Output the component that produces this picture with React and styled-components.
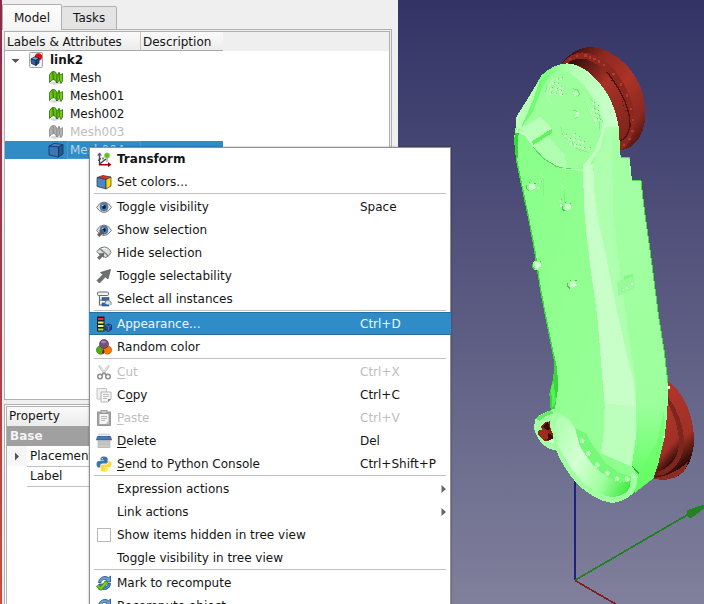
import React, { useState } from 'react';
import styled, { createGlobalStyle, css } from 'styled-components';

const colors = {
  window: '#efefef',
  base: '#ffffff',
  text: '#141414',
  disabled: '#bebebe',
  highlight: '#308cc6',
  highlightEdge: '#2670a0',
  frame: '#b0b0b0',
};

const GlobalStyle = createGlobalStyle`
  * {
    box-sizing: border-box;
  }

  body {
    margin: 0;
    overflow: hidden;
    background: ${colors.window};
    color: ${colors.text};
    font-family: 'DejaVu Sans', sans-serif;
    font-size: 12px;
    line-height: 18px;
  }

  button {
    margin: 0;
    padding: 0;
    border: 0;
    background: none;
    color: inherit;
    font: inherit;
    text-align: left;
  }
`;

const Window = styled.div`
  position: relative;
  display: flex;
  height: 100vh;
  overflow: hidden;
`;

const SidePanel = styled.aside`
  display: flex;
  flex-direction: column;
  flex: 0 0 398px;
  padding: 4px 6px 0 0;
  border-left: 2px solid;
  border-image: linear-gradient(#8c2a4c, #a83a48 50%, #d04a3c) 1;
  background: ${colors.window};
`;

const Tabs = styled.div`
  display: flex;
  align-items: flex-end;
  height: 26px;
`;

const Tab = styled.button`
  height: ${(props) => (props.$active ? 26 : 24)}px;
  padding: 0 11px;
  border: 1px solid ${colors.frame};
  border-bottom: ${(props) => (props.$active ? 'none' : `1px solid ${colors.frame}`)};
  border-left-width: ${(props) => (props.$active ? 1 : 0)}px;
  border-radius: 2px 2px 0 0;
  background: ${(props) => (props.$active ? 'linear-gradient(#fdfdfd, #f4f4f4)' : '#e4e4e4')};
`;

const TabLine = styled.div`
  flex: 1;
  height: 1px;
  background: ${colors.frame};
`;

const Pane = styled.div`
  display: flex;
  flex-direction: column;
  flex: 1;
  gap: 4px;
  padding: 1px 1px 0 2px;
  border-right: 1px solid ${colors.frame};
`;

const TreeFrame = styled.section`
  flex: 0 0 369px;
  border: 1px solid ${colors.frame};
  background: linear-gradient(${colors.window} 19px, ${colors.base} 19px);
`;

const Tree = styled.table`
  width: 218px;
  border-collapse: collapse;
  table-layout: fixed;

  th,
  td {
    height: 18px;
    padding: 0;
    overflow: hidden;
    white-space: nowrap;
  }
`;

const TreeHeading = styled.th`
  width: ${(props) => props.$width}px;

  div {
    height: 19px;
    padding: 1px 0 0 2px;
    border-right: ${(props) => (props.$divided ? '1px solid #c6c6c6' : 'none')};
    border-bottom: 1px solid #a8a8a8;
    background: linear-gradient(#fafafa, #ececec);
    font-weight: normal;
    text-align: left;
  }
`;

const TreeRow = styled.tr`
  color: ${(props) => (props.$hidden ? colors.disabled : colors.text)};
  font-weight: ${(props) => (props.$root ? 'bold' : 'normal')};

  ${(props) =>
    props.$selected &&
    css`
      background: ${colors.highlight};
      color: #b4d6ec;
    `}
`;

const TreeItem = styled.div`
  display: flex;
  align-items: center;
  height: 18px;
  padding-left: ${(props) => (props.$root ? 6 : 43)}px;
`;

const TreeLabel = styled.span`
  flex: 1;
  height: 18px;
  margin-left: 3px;
  padding-left: 3px;
  line-height: 19px;
  box-shadow: ${(props) => (props.$focused ? 'inset 0 0 0 1px #4a9ad0' : 'none')};
`;

const Expander = styled.span`
  display: flex;
  width: 17px;
`;

const PropertyFrame = styled.section`
  flex: 1;
  padding: 1px 1px 0;
  border: 1px solid ${colors.frame};
  border-bottom: 0;
  background: ${colors.base};
`;

const PropertyInner = styled.div`
  height: 100%;
  border: 1px solid ${colors.frame};
  border-bottom: 0;
`;

const PropertyTable = styled.table`
  width: 100%;
  border-collapse: collapse;

  th,
  td {
    padding: 0;
    font-weight: normal;
    text-align: left;
  }

  thead th {
    height: 18px;
    padding-left: 2px;
    background: linear-gradient(#fafafa, #ebebeb);
    line-height: 19px;
  }
`;

const GroupCell = styled.th`
  && {
    height: 20px;
    padding-left: 3px;
    background: #a0a0a0;
    color: #f4f4f4;
    font-weight: bold;
  }
`;

const ExpandCell = styled.td`
  width: 20px;
  height: 20px;
  background: ${(props) => (props.$shaded ? '#f6f6f6' : colors.base)};

  svg {
    display: block;
    margin-left: 6px;
  }
`;

const PropertyName = styled.td`
  && {
    height: 20px;
    padding-left: 3px;
    border-bottom: 1px solid #c0c0c0;
  }
`;

const Viewport = styled.main`
  flex: 1;
  min-width: 0;
  background: linear-gradient(#333366, #80809c);

  svg {
    display: block;
    width: 100%;
    height: 100%;
  }
`;

const Menu = styled.div`
  position: absolute;
  top: 147px;
  left: 89px;
  width: 362px;
  background: ${colors.base};
  box-shadow: inset 0 0 0 1px #8f8f8f, 0 0 2px rgba(0, 0, 0, 0.35);
`;

const itemLayout = css`
  display: grid;
  grid-template-columns: 16px 1fr 86px;
  column-gap: 5px;
  align-items: center;
  width: 100%;
  height: 23px;
  padding: 0 5px 0 7px;
  white-space: nowrap;

  u {
    text-underline-offset: 2px;
  }
`;

const MenuItem = styled.button`
  ${itemLayout}
  font-weight: ${(props) => (props.$bold ? 'bold' : 'normal')};

  &:disabled {
    color: ${colors.disabled};
  }

  ${(props) =>
    props.$current &&
    css`
      border: solid ${colors.highlightEdge};
      border-width: 1px 0;
      background: ${colors.highlight};
      color: #eef6fb;
    `}
`;

const MenuCheck = styled.label`
  ${itemLayout}

  input {
    appearance: none;
    width: 14px;
    height: 14px;
    margin: 0 0 0 1px;
    border: 1px solid #b8b8b8;
    background: ${colors.base};
  }

  input:checked {
    background: ${colors.highlight};
  }
`;

const IconSlot = styled.span`
  display: flex;
  width: 16px;
  height: 16px;
`;

const SubmenuArrow = styled.svg`
  justify-self: end;
`;

const Separator = styled.hr`
  height: 2px;
  margin: 0 5px;
  border: 0;
  border-top: 1px solid #c0c0c0;
`;

const Svg = ({ children }) => (
  <svg width="16" height="16" viewBox="0 0 16 16" aria-hidden="true">
    {children}
  </svg>
);

const MeshIcon = ({ muted }) => {
  const fill = muted ? '#b4b4b4' : '#73d216';
  const edge = muted ? '#888888' : '#2c6a05';
  return (
    <Svg>
      <path d="M1 13 6 15l9-2-4-2z" fill="#d8d8d8" />
      <g fill={fill} stroke={edge} strokeWidth=".8" strokeLinejoin="round">
        <path d="M1.500 5 3 2.500 5 1.500 5.500 9.500 3.500 10.500 1.500 12.500z" />
        <path d="M5 1.500 7.500 2 9 5v8L7 10l-1.500-.5z" />
        <path d="M9 5 11 2.500 11.500 10 9 13z" />
        <path d="M11 2.500 12.500 5 14.500 3.500V11L13 13.500 11.500 10z" />
      </g>
      <path d="M4 3v7M7 3v7" stroke={edge} strokeWidth=".4" fill="none" />
    </Svg>
  );
};

const LinkGroupIcon = () => (
  <Svg>
    <rect x="1.500" y=".5" width="13" height="15" rx="1" fill="#f0f0ee" stroke="#a4a6a2" />
    <circle cx="10.500" cy="4.800" r="3.600" fill="#d90d16" />
    <g stroke="#0b1f3a" strokeWidth=".7" strokeLinejoin="round">
      <path d="M3 7 6.500 4.800 11 6 8 8.500z" fill="#729fcf" />
      <path d="m3 7 5 1.500v5L3.500 11.500z" fill="#3465a4" />
      <path d="M8 8.500 11 6v5l-3 2.500z" fill="#204a87" />
    </g>
  </Svg>
);

const BoxIcon = () => (
  <Svg>
    <g stroke="#12345f" strokeWidth=".8" strokeLinejoin="round">
      <path d="M1 4 6 1.500l9 1L10.500 5z" fill="#4a85c2" />
      <path d="m1 4 9.500 1v10L1 13z" fill="#3a76b8" />
      <path d="M10.500 5 15 2.500V12l-4.500 3z" fill="#24568f" />
    </g>
  </Svg>
);

const TransformIcon = () => (
  <Svg>
    <path d="M3.500 2.500v10.500L10 8M2 9.500l3-2" stroke="#41484c" strokeWidth="1.400" fill="none" />
    <path d="m1 4.500 2.500-3 2.500 3z" fill="#555b5e" />
    <path d="M5.500 6.500h3L7 9.500z" fill="#888a85" />
    <circle cx="11" cy="4.500" r="2.800" fill="#5fc21b" stroke="#b5dba0" strokeWidth=".7" />
    <path d="M11 7v4" stroke="#888a85" />
    <path d="M3 13h9v-2l3.500 2.700L12 16v-1.500H3z" fill="#a40000" />
  </Svg>
);

const ColorCubeIcon = () => (
  <Svg>
    <g stroke="#2e3436" strokeWidth=".7" strokeLinejoin="round">
      <path d="M1 3.500 7 1.500l8 1.500-5 2.500z" fill="#ef2929" />
      <path d="m1 3.500 9 2V15l-9-2.500z" fill="#4b87c8" />
      <path d="m10 5.500 5-2.500v9L10 15z" fill="#f7d800" />
    </g>
  </Svg>
);

const EyeIcon = ({ children }) => (
  <Svg>
    <path d="M.5 8.500Q3.500 3 8 3t7.500 5.500Q12 13.500 8 13.500T.5 8.500z" fill="#e9e9e7" stroke="#72767a" />
    <circle cx="8" cy="8" r="4" fill="#5580b6" stroke="#3b618f" strokeWidth=".7" />
    <circle cx="8" cy="8" r="1.900" fill="#0e1a28" />
    <circle cx="6.700" cy="6.500" r=".8" fill="#c9dcef" />
    {children}
  </Svg>
);

const ShowIcon = () => (
  <EyeIcon>
    <path d="M8 8v5l-1.500-1.500L3.500 15 1 12.500 4 10 2.500 8.500z" fill="#5b5f61" />
  </EyeIcon>
);

const HideIcon = () => (
  <Svg>
    <path d="M.8 6.500Q4 1.500 8.500 2q5 .5 6.500 5.500-2 4-5 5-6-1-9.200-6z" fill="#dededc" stroke="#777b7d" />
    <path d="M3.500 3.500 12.500 11" stroke="#777b7d" strokeWidth="1.200" />
    <path d="M6 3.500q4-1 5 1.500" stroke="#ffffff" fill="none" />
    <path d="M8 8v5l-1.500-1.500L3.500 15 1 12.500 4 10 2.500 8.500z" fill="#686c6e" />
  </Svg>
);

const CursorIcon = () => (
  <Svg>
    <path d="M14.500 1.500 12 11 9.500 8.800 3.500 15 1 12.500 7 6.500 4.500 4.500z" fill="#6d7173" stroke="#505456" strokeWidth=".7" />
  </Svg>
);

const InstancesIcon = () => (
  <Svg>
    <path d="M3.500 5v9H8M3.500 9H6" stroke="#686c6e" fill="none" strokeWidth="1.200" />
    <rect x="1.500" y="1" width="11" height="3.500" rx="1" fill="#f2f2f0" stroke="#686c6e" />
    <rect x="6" y="6.500" width="7" height="3" fill="#3465a4" stroke="#204a87" strokeWidth=".6" />
    <rect x="6" y="12" width="7" height="3" fill="#3465a4" stroke="#204a87" strokeWidth=".6" />
    <path d="M9 13q-.5-3.500 3-4l3 2v3" fill="#e0e0de" stroke="#686c6e" strokeWidth=".8" />
  </Svg>
);

const AppearanceIcon = () => (
  <Svg>
    <rect x="1" y=".5" width="7.500" height="15" fill="#172027" />
    <rect x="2" y="2" width="5.500" height="2" fill="#ef2929" />
    <rect x="2" y="5.500" width="5.500" height="2" fill="#fce94f" />
    <rect x="2" y="9" width="5.500" height="2" fill="#f4f080" />
    <rect x="2" y="12.500" width="5.500" height="2" fill="#8ae234" />
    <path d="m9 9.500 3-1.500 3.500 1v4.500l-3 2L9 14z" fill="#204a87" stroke="#0b2549" strokeWidth=".6" />
    <path d="m9.500 9.700 3 .8 2.500-1.300M12.500 10.500v4.500" stroke="#5288c4" strokeWidth=".7" fill="none" />
  </Svg>
);

const RandomColorIcon = () => (
  <Svg>
    <circle cx="4.700" cy="11" r="4.300" fill="#4eae12" stroke="#2f6f05" strokeWidth=".6" />
    <circle cx="11.500" cy="11" r="4.200" fill="#f57900" stroke="#a85000" strokeWidth=".6" />
    <circle cx="8" cy="5" r="4.500" fill="#75507b" stroke="#4f3056" strokeWidth=".6" />
    <ellipse cx="7.500" cy="3" rx="2.500" ry="1.300" fill="#a588aa" />
    <path d="m7 10 1.500 2-1 3-1.500-1z" fill="#a40000" />
  </Svg>
);

const CutIcon = () => (
  <Svg>
    <path d="M3 1.500 10 11M13 1.500 6 11" stroke="#c8c8c8" strokeWidth="2.200" />
    <path d="M3.500 1.500 9 9.500M12.500 1.500 7 9.500" stroke="#f0f0f0" strokeWidth=".8" />
    <circle cx="4" cy="12.500" r="2.300" fill="none" stroke="#8c8c8c" strokeWidth="1.500" />
    <circle cx="12" cy="12.500" r="2.300" fill="none" stroke="#8c8c8c" strokeWidth="1.500" />
    <path d="m6 10.500 2-2 2 2" stroke="#8c8c8c" strokeWidth="1.200" fill="none" />
  </Svg>
);

const CopyIcon = () => (
  <Svg>
    <path d="M1 1.500h9.500V12H1z" fill="#f0f0f0" stroke="#c4c4c4" />
    <path d="M5 5h10v7l-3 3H5z" fill="#f7f7f7" stroke="#b4b4b4" />
    <path d="M7 7.500h6M7 9.500h6M7 11.500h4" stroke="#bcbcbc" />
    <path d="M15 12h-3v3z" fill="#8d8d8d" />
  </Svg>
);

const PasteIcon = () => (
  <Svg>
    <path d="M1.500 2h13v13.500h-13z" fill="#a5a5a5" stroke="#969696" />
    <path d="M3.500 4h9v10h-9z" fill="#f5f5f5" />
    <rect x="5" y=".5" width="6" height="3" fill="#c8c8c8" stroke="#8f8f8f" strokeWidth=".8" />
    <path d="M5 6.500h6M5 8.500h6M5 10.500h4" stroke="#b8b8b8" />
    <path d="M12.500 11 10 14h2.500z" fill="#bcbcbc" />
  </Svg>
);

const DeleteIcon = () => (
  <Svg>
    <path d="M3 1h10v4H3z" fill="#f0f0ee" stroke="#babdb6" strokeWidth=".7" />
    <path d="M1.500 3.500h13L15.500 7H.5z" fill="#4679bb" stroke="#204a87" strokeWidth=".7" />
    <circle cx="12.500" cy="4.800" r=".8" fill="#ef2929" />
    <path d="M2 8h12v6.500H2z" fill="#d8d8d6" stroke="#a8aaa6" strokeWidth=".7" />
    <path d="M4 8v6M6 8v6M8 8v6M10 8v6M12 8v6M2 11h12" stroke="#a0a29e" strokeWidth=".5" />
  </Svg>
);

const PythonIcon = () => (
  <Svg>
    <path d="M8 .5C5 .5 4.500 1.800 4.500 3v1.500H8V5H3C1.500 5 .5 6.200.5 8.200S1.500 11.500 3 11.500h1.300V9.700c0-1.300 1-2.200 2.200-2.200H10c1 0 1.700-.8 1.700-1.800V3C11.700 1.500 10.500.5 8 .5z" fill="#3b77a8" />
    <path d="M8 15.700c3 0 3.600-1.300 3.600-2.500v-1.500H8v-.5h5.200c1.500 0 2.400-1.200 2.400-3.200S14.700 4.800 13.200 4.800h-.8v1.600c0 1.300-1 2.200-2.200 2.200H6.500c-1 0-1.800.8-1.800 1.800v2.800c0 1.500 1.300 2.500 3.300 2.500z" fill="#ffd845" />
    <circle cx="6.300" cy="2.600" r=".7" fill="#fff" />
    <circle cx="9.800" cy="13.500" r=".7" fill="#fff" />
  </Svg>
);

const RefreshArrows = () => (
  <>
    <path d="M2.500 7.500C3 3.500 6 1.500 9 1.500c1.500 0 2.700.5 3.500 1.300L14.500 1v6H8.700l2-2C8.500 3.500 6 4.500 5 7.500z" fill="#6d9dd0" stroke="#204a87" strokeWidth=".8" />
    <path d="M14.500 8.500c-.5 4-3 6-6 6-1.500 0-2.700-.5-3.500-1.300L3 15V9h5.800l-2 2c2.200 1.500 4.700.5 5.200-2.500z" fill="#4f85bf" stroke="#204a87" strokeWidth=".8" />
  </>
);

const MarkIcon = () => (
  <Svg>
    <RefreshArrows />
    <path d="m.5 11.500 2-1.500 2 1.800L9.500 6l2.500 1.500-6.800 8z" fill="#73d216" stroke="#3a7d06" strokeWidth=".8" />
  </Svg>
);

const RecomputeIcon = () => (
  <Svg>
    <RefreshArrows />
  </Svg>
);

const Triangle = ({ down }) => (
  <svg width="9" height="9" viewBox="0 0 9 9" aria-hidden="true">
    <path d={down ? 'M.5 3h8l-4 4z' : 'M2 .5v8l4-4z'} fill="#555555" />
  </svg>
);

const treeItems = [
  { label: 'Mesh' },
  { label: 'Mesh001' },
  { label: 'Mesh002' },
  { label: 'Mesh003', hidden: true },
  { label: 'Mesh004', selected: true },
];

const menuGroups = [
  [
    { label: 'Transform', icon: TransformIcon, bold: true },
    { label: 'Set colors...', icon: ColorCubeIcon },
  ],
  [
    { label: 'Toggle visibility', icon: EyeIcon, shortcut: 'Space' },
    { label: 'Show selection', icon: ShowIcon },
    { label: 'Hide selection', icon: HideIcon },
    { label: 'Toggle selectability', icon: CursorIcon },
    { label: 'Select all instances', icon: InstancesIcon },
  ],
  [
    { label: 'Appearance...', icon: AppearanceIcon, shortcut: 'Ctrl+D', current: true },
    { label: 'Random color', icon: RandomColorIcon },
  ],
  [
    { label: 'Cut', key: 0, icon: CutIcon, shortcut: 'Ctrl+X', disabled: true },
    { label: 'Copy', key: 1, icon: CopyIcon, shortcut: 'Ctrl+C' },
    { label: 'Paste', key: 0, icon: PasteIcon, shortcut: 'Ctrl+V', disabled: true },
    { label: 'Delete', key: 0, icon: DeleteIcon, shortcut: 'Del' },
    { label: 'Send to Python Console', key: 0, icon: PythonIcon, shortcut: 'Ctrl+Shift+P' },
  ],
  [
    { label: 'Expression actions', submenu: true },
    { label: 'Link actions', submenu: true },
    { label: 'Show items hidden in tree view', checkbox: true },
    { label: 'Toggle visibility in tree view' },
  ],
  [
    { label: 'Mark to recompute', icon: MarkIcon },
    { label: 'Recompute object', icon: RecomputeIcon },
  ],
];

function MenuLabel({ text, mnemonic }) {
  if (mnemonic === undefined) return <span>{text}</span>;
  return (
    <span>
      {text.slice(0, mnemonic)}
      <u>{text[mnemonic]}</u>
      {text.slice(mnemonic + 1)}
    </span>
  );
}

function MenuEntry({ item }) {
  const [checked, setChecked] = useState(false);
  const Icon = item.icon;

  if (item.checkbox) {
    return (
      <MenuCheck>
        <input type="checkbox" checked={checked} onChange={() => setChecked(!checked)} />
        <span>{item.label}</span>
      </MenuCheck>
    );
  }

  return (
    <MenuItem type="button" role="menuitem" disabled={item.disabled} $bold={item.bold} $current={item.current}>
      <IconSlot>{Icon && <Icon />}</IconSlot>
      <MenuLabel text={item.label} mnemonic={item.key} />
      {item.shortcut && <span>{item.shortcut}</span>}
      {item.submenu && (
        <SubmenuArrow width="5" height="8" viewBox="0 0 5 8">
          <path d="M.5 0v8L5 4z" fill="#666666" />
        </SubmenuArrow>
      )}
    </MenuItem>
  );
}

function ContextMenu() {
  return (
    <Menu role="menu">
      {menuGroups.map((group, index) => (
        <React.Fragment key={group[0].label}>
          {index > 0 && <Separator />}
          {group.map((item) => (
            <MenuEntry key={item.label} item={item} />
          ))}
        </React.Fragment>
      ))}
    </Menu>
  );
}

// small screw heads on the cover, [x, y] in drawing units
const screws = [
  [170, 148], [183, 146], [158, 160], [172, 162], [152, 176], [168, 178], [181, 172], [150, 190], [166, 192], [181, 184], [184, 195],
  [278, 220], [290, 228], [278, 238], [290, 244], [282, 254], [294, 258], [288, 268], [297, 270],
  [196, 317], [208, 328], [222, 314], [234, 321], [222, 328], [212, 340], [238, 334], [226, 346], [248, 338], [238, 350], [250, 354], [266, 356],
  [119, 456], [117, 474], [180, 512], [182, 526],
];

const bosses = [[95, 471], [202, 532], [112, 706], [218, 764]];
const rimScrews = [[247, 1232], [265, 1270], [292, 1305], [322, 1330], [352, 1346], [382, 1347], [400, 1338]];
const flangeHoles = [[210, 87], [230, 77], [256, 76], [270, 82], [283, 87], [297, 94], [312, 105], [340, 131], [362, 163], [380, 196], [392, 236], [399, 270], [397, 302], [388, 327], [371, 345]];

function Scene() {
  return (
    <svg viewBox="-306 -90 918 1812" preserveAspectRatio="xMidYMid slice" shapeRendering="crispEdges" role="img" aria-label="link2">
      <defs>
        <linearGradient id="drum" x1="0" y1="0" x2="1" y2="1">
          <stop offset="0" stopColor="#1c0605" />
          <stop offset=".28" stopColor="#8c281f" />
          <stop offset=".55" stopColor="#ac3328" />
          <stop offset=".8" stopColor="#8a281f" />
          <stop offset="1" stopColor="#2a0906" />
        </linearGradient>
        <linearGradient id="drumInner" x1="0" y1="0" x2="1" y2="1">
          <stop offset="0" stopColor="#260806" />
          <stop offset=".45" stopColor="#a83228" />
          <stop offset="1" stopColor="#7a231b" />
        </linearGradient>
        <linearGradient id="wheel" x1="0" y1="0" x2=".35" y2="1">
          <stop offset="0" stopColor="#b5372c" />
          <stop offset=".75" stopColor="#a03026" />
          <stop offset="1" stopColor="#2a0a07" />
        </linearGradient>
        <linearGradient id="cup" x1="0" y1=".3" x2="1" y2=".8">
          <stop offset="0" stopColor="#b4ffb4" />
          <stop offset=".35" stopColor="#d4ffd4" />
          <stop offset=".7" stopColor="#a2ffa2" />
          <stop offset="1" stopColor="#46ee46" />
        </linearGradient>
        <linearGradient id="side" x1="0" y1="0" x2="0" y2="1">
          <stop offset="0" stopColor="#a6ffa6" />
          <stop offset=".75" stopColor="#9cff9c" />
          <stop offset=".88" stopColor="#7cff7c" />
          <stop offset="1" stopColor="#58fa58" />
        </linearGradient>
        <linearGradient id="front" x1="0" y1="0" x2="1" y2="1">
          <stop offset="0" stopColor="#86ff86" />
          <stop offset=".5" stopColor="#92ff92" />
          <stop offset="1" stopColor="#a0ffa0" />
        </linearGradient>
        <linearGradient id="crown" x1="0" y1="0" x2="1" y2="0">
          <stop offset="0" stopColor="#a8ffa8" />
          <stop offset=".3" stopColor="#7cff7c" />
          <stop offset=".55" stopColor="#b4ffb4" />
          <stop offset="1" stopColor="#ccffcc" />
        </linearGradient>
      </defs>

      {/* axis cross */}
      <path d="M224 1340V1650" stroke="#20207f" strokeWidth="5" />
      <path d="M226 1650 565 1453" stroke="#207f20" strokeWidth="5" />
      <path d="M226 1652 350 1724" stroke="#7f2020" strokeWidth="5" />
      <path d="m561 1441 51-17v12l-40 29-11-7z" fill="#208220" />

      {/* upper motor */}
      <path d="M185 100Q215 60 262 51 330 50 388 115 438 175 436 260 430 345 362 362L240 180z" fill="url(#drum)" />
      <path d="M185 101Q210 70 245 67 300 70 345 122 405 200 404 280 396 345 362 360L352 260 230 100z" fill="#8b271e" />
      <path d="M205 99Q225 82 260 88 305 105 340 148 392 215 390 290 382 325 360 333L340 220 245 110z" fill="url(#drumInner)" />
      <path d="M320 125Q392 215 390 290 382 325 360 333" fill="none" stroke="#4c130e" strokeWidth="4" />
      {flangeHoles.map(([x, y]) => (
        <rect key={`${x}-${y}`} x={x - 3} y={y - 3} width="7" height="7" fill="#b23a30" />
      ))}
      <path d="M366 214h4M368 226h4M374 242h4M332 152h4" stroke="#4c130e" strokeWidth="3" />

      {/* lower motor */}
      <path d="M500 1050Q545 1085 562 1130 582 1180 582 1235 578 1300 540 1335 510 1352 458 1345z" fill="url(#wheel)" />
      <path d="M502 1096Q550 1165 553 1235 548 1310 490 1335L470 1335 500 1300 512 1240z" fill="#7e251d" />
      <path d="M502 1116Q535 1175 538 1240 530 1310 470 1325L490 1230z" fill="url(#wheel)" />
      <path d="m460 1345 40-10 40-20 25-20-15 32-25 16-35 8z" fill="#8a2a20" />

      {/* cover silhouette */}
      <path
        d="M200 100Q250 103 290 150 340 200 356 290L362 382 389 385 396 452 423 453 432 530 450 660 464 780 476 860 492 960 504 1060Q505 1150 492 1230L475 1300 460 1345 400 1390Q370 1416 335 1419 280 1410 230 1360 190 1315 168 1260 140 1260 120 1233 103 1210 103 1190 104 1165 120 1155L152 1140 148 1090 160 1045 163 990 145 900 122 780 104 660 85 560 62 450 50 390 43 320 48 285 48 262 90 195 125 135Q160 103 200 100z"
        fill="url(#front)"
      />
      <path d="M43 320 50 390 62 450 85 560 104 660 122 780 145 900 163 990" fill="none" stroke="#3cd83c" strokeWidth="4" />
      <path d="M44 310 56 306 52 395z" fill="#36d636" />
      <path d="M163 975 172 1020 174 1075 165 1135 152 1140 148 1090 160 1045z" fill="#37d837" />
      <path d="M153 1075 160 1055 168 1110 158 1135z" fill="#58f058" />

      {/* right side wall */}
      <path d="M356 290 362 382 389 385 396 452 423 453 432 530 450 660 476 860 504 1060Q505 1150 492 1230L475 1300 460 1345 400 1390 408 1330 395 1308 410 1200 408 1080 370 900 320 500 280 400 315 290z" fill="url(#side)" />
      <path d="M308 290 356 285 335 330 340 560 366 780 408 1060 408 1130 388 1010 345 830 305 640 284 520 280 400 320 330z" fill="#aeffae" />
      <path d="M362 382h27l1 6M396 452h27l9 80 18 128 26 200 16 100 12 100" fill="none" stroke="#49de49" strokeWidth="3" />
      <path d="M492 1140 470 1240 410 1330 404 1390 460 1345 475 1300 492 1230z" fill="#68fd68" opacity=".6" />

      {/* ridge */}
      <path d="M248 410 280 402 282 480 292 560 310 640 326 720 350 840 380 970 402 1060 408 1130 408 1220 395 1310 303 1270 312 1200 314 1120 305 1020 292 860 275 740 265 660 254 560z" fill="#c8ffc8" />
      <path d="M314 1120 408 1130 408 1220 395 1310 303 1270 312 1200z" fill="#bcffbc" />
      <path d="M303 1270 395 1310 403 1325 388 1345 350 1340 280 1290 225 1195z" fill="#8cff8c" />

      {/* crown */}
      <path d="M48 262 90 195 125 135Q160 103 200 100 250 103 290 150 340 200 356 290L315 290Q295 230 262 195 225 140 190 125L155 132 130 160 110 205 100 245 60 300 48 285z" fill="url(#crown)" />
      <path d="M155 130Q190 110 225 140 270 180 295 232 312 270 302 320 290 370 255 405L210 416Q145 400 100 348L60 300 98 245 112 202z" fill="#9cff9c" />
      <path d="M148 135 120 150 104 198 62 296 98 246 116 200 130 158z" fill="#74fa74" />
      <path d="M48 262 120 150 104 198 62 296 50 300z" fill="#b8ffb8" />
      <path d="m48 300 30 10 25 38 47 44 60 24 45 0-8 6-50-2-50-22-48-48-25-34-26-10z" fill="#c2ffc2" />
      <path d="M100 352 130 385 170 410 214 417" fill="none" stroke="#55dd55" strokeWidth="3" />
      <path d="M307 280 318 290 300 355 260 420 230 412 255 402 285 360 302 315z" fill="#c4ffc4" />
      <path d="m100 348 45-28 50 55 4 42-54-26z" fill="#b0ffb0" />

      {/* raised bracket */}
      <path d="m62 296 58-35 36 35-60 38z" fill="#baffba" />
      <path d="m96 334 60-38v13l-60 38z" fill="#60f460" />
      <path d="m62 296 12 18 26 34-4-14z" fill="#d0ffd0" />

      {/* engraved slots */}
      <g fill="none" stroke="#b8ffb8" strokeWidth="3">
        <path d="m160 147-18 32v20l12 22M254 190l40 110M118 425l12 18M180 458l14 18" />
      </g>
      <g fill="none" stroke="#82f482" strokeWidth="3">
        <path d="m272 205 26 56v38M182 290l6 24 44 42 36 12M140 165l-3 22M130 443v56M194 476v50" />
      </g>
      <path d="m218 176 15 3 6 14-8 8M218 240l12 4 4 14-8 8" fill="none" stroke="#6ce66c" strokeWidth="3" />
      <path d="m217 188 12-4 6 8-10 8zM227 248l9-3v14l-10 5z" fill="#c8ffc8" />

      <path d="M230 405h20v14h-12zM352 755l50-22v45l-48 20z" fill="#98fa98" />
      <path d="M370 740 398 732v8l-26 10z" fill="#84f884" />
      <path d="M368 776h5v5h-5zM378 771h5v5h-5zM393 758h6v6h-6z" fill="#d8ffd8" />
      <path d="M500 1068h10v8h-10zM486 1218h9v7h-9z" fill="#ccffcc" />

      {screws.map(([x, y]) => (
        <g key={`${x}-${y}`}>
          <rect x={x - 3} y={y - 3} width="7" height="7" fill="#ccffcc" />
          <rect x={x + 3} y={y - 4} width="3" height="3" fill="#58de58" />
        </g>
      ))}
      {bosses.map(([x, y]) => (
        <g key={`${x}-${y}`}>
          <path d={`M${x - 14} ${y - 8}l7-6 20 3 3 16-10 9-17-1-5-8z`} fill="#98f898" />
          <path d={`M${x - 7} ${y - 9}l15-2 4 14-12 7-7-4z`} fill="#ccffcc" />
          <path d={`M${x - 15} ${y - 5}v9l7 8M${x - 8} ${y - 14}h4M${x + 8} ${y - 12}h4`} fill="none" stroke="#42cc42" strokeWidth="3" />
        </g>
      ))}

      {/* bottom cup */}
      <path d="M152 1140 190 1155 222 1180 205 1180 178 1168 162 1200 160 1230 190 1305 168 1260 150 1220z" fill="#a4ffa4" />
      <path d="M190 1158 208 1172 225 1195 240 1250 278 1305 320 1340 360 1358 392 1352 388 1378 370 1394 340 1402Q300 1398 250 1358 195 1300 172 1240L162 1200 168 1172z" fill="url(#cup)" />
      <path d="M225 1195 258 1210 280 1250 320 1302 360 1330 398 1340 388 1355 350 1356 318 1340 276 1302 240 1250z" fill="#78f878" />
      <path d="M400 1328 414 1335 408 1375Q370 1416 335 1419 280 1410 230 1360 185 1305 162 1240L165 1225Q200 1310 250 1358 300 1398 340 1402 380 1395 388 1374z" fill="#a0ffa0" />
      <path d="m395 1307 22 24" stroke="#33a833" strokeWidth="3" />
      {rimScrews.map(([x, y]) => (
        <g key={x}>
          <path d={`M${x - 8} ${y - 5}l8-4 8 7-3 9-10 1z`} fill="#a4ffa4" />
          <path d={`M${x - 3} ${y - 5}h5v6h4v5h-7z`} fill="#ccffcc" />
        </g>
      ))}

      {/* hinge eye */}
      <path d="M104 1170 120 1155 150 1142 162 1152 158 1170 136 1176 122 1192 118 1214 135 1236 158 1244 168 1260 150 1257 120 1233 103 1200z" fill="#a8ffa8" />
      <path d="m106 1166 14-10 32-16 10 10-24 8-20 14z" fill="#5cf05c" />
      <path d="M122 1190 136 1176 150 1174 152 1200 160 1214 160 1232 132 1232 114 1212 116 1202 128 1198z" fill="#84231b" />
      <path d="m120 1200 14-4 14 12-4 20-16-2-12-14z" fill="#9c2c22" />
      <path d="m144 1175 6 22-10 5-12-12zM145 1210l15 8v8l-18 4z" fill="#390d0a" />
      <path d="m162 1225-22 10 20 8z" fill="#c8ffc8" />
    </svg>
  );
}

function ModelTree() {
  return (
    <TreeFrame>
      <Tree>
        <thead>
          <tr>
            <TreeHeading $width={136} $divided>
              <div>Labels &amp; Attributes</div>
            </TreeHeading>
            <TreeHeading $width={82}>
              <div>Description</div>
            </TreeHeading>
          </tr>
        </thead>
        <tbody>
          <TreeRow $root>
            <td>
              <TreeItem $root>
                <Expander>
                  <Triangle down />
                </Expander>
                <LinkGroupIcon />
                <TreeLabel>link2</TreeLabel>
              </TreeItem>
            </td>
            <td />
          </TreeRow>
          {treeItems.map((item) => (
            <TreeRow key={item.label} $hidden={item.hidden} $selected={item.selected}>
              <td>
                <TreeItem>
                  {item.selected ? <BoxIcon /> : <MeshIcon muted={item.hidden} />}
                  <TreeLabel $focused={item.selected}>{item.label}</TreeLabel>
                </TreeItem>
              </td>
              <td />
            </TreeRow>
          ))}
        </tbody>
      </Tree>
    </TreeFrame>
  );
}

function PropertyEditor() {
  return (
    <PropertyFrame>
      <PropertyInner>
        <PropertyTable>
          <thead>
            <tr>
              <th colSpan={2}>Property</th>
            </tr>
          </thead>
          <tbody>
            <tr>
              <GroupCell colSpan={2}>Base</GroupCell>
            </tr>
            <tr>
              <ExpandCell $shaded>
                <Triangle />
              </ExpandCell>
              <PropertyName>Placement</PropertyName>
            </tr>
            <tr>
              <ExpandCell />
              <PropertyName>Label</PropertyName>
            </tr>
          </tbody>
        </PropertyTable>
      </PropertyInner>
    </PropertyFrame>
  );
}

function App() {
  const [tab, setTab] = useState('Model');

  return (
    <>
      <GlobalStyle />
      <Window>
        <SidePanel>
          <Tabs role="tablist">
            {['Model', 'Tasks'].map((name) => (
              <Tab key={name} type="button" role="tab" aria-selected={tab === name} $active={tab === name} onClick={() => setTab(name)}>
                {name}
              </Tab>
            ))}
            <TabLine />
          </Tabs>
          <Pane>
            <ModelTree />
            <PropertyEditor />
          </Pane>
        </SidePanel>
        <Viewport>
          <Scene />
        </Viewport>
        <ContextMenu />
      </Window>
    </>
  );
}

export default App;
